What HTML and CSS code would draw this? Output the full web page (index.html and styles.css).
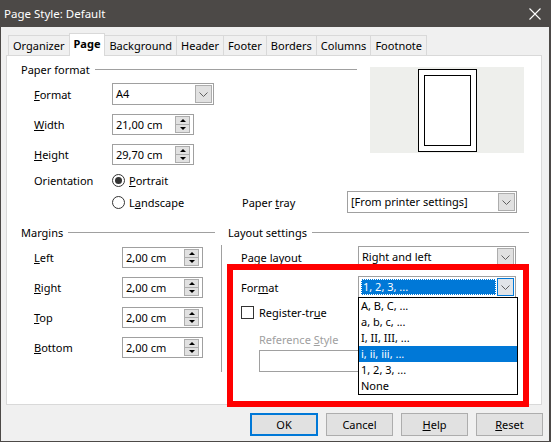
FILE: index.html
```html
<!DOCTYPE html>
<html>
<head>
<meta charset="utf-8">
<title>Page Style: Default</title>
<link rel="stylesheet" href="styles.css">
</head>
<body>
<div class="window">
  <div class="titlebar">
    <span class="title">Page Style: Default</span>
    <svg class="close" width="12" height="12" viewBox="0 0 12 12"><path d="M0.5 0.5 L11.5 11.5 M11.5 0.5 L0.5 11.5" stroke="#fff" stroke-width="1.1" fill="none"/></svg>
  </div>
  <div class="tabs">
    <div class="tab">Organizer</div>
    <div class="tab active">Page</div>
    <div class="tab">Background</div>
    <div class="tab">Header</div>
    <div class="tab">Footer</div>
    <div class="tab">Borders</div>
    <div class="tab">Columns</div>
    <div class="tab">Footnote</div>
  </div>
  <div class="panel">
    <div class="top">
      <div class="heading h-paper">Paper format</div>
      <div class="lbl r2"><u>F</u>ormat</div>
      <div class="combo c-a4 r2"><span class="val">A4</span><span class="btn"><svg width="9" height="5" viewBox="0 0 9 5"><path d="M0.5 0.5 L4.5 4.5 L8.5 0.5" fill="none" stroke="#606060"/></svg></span></div>
      <div class="lbl r3"><u>W</u>idth</div>
      <div class="spin s-paper r3"><span class="val">21,00 cm</span><span class="sbtn"><span><b class="up"></b></span><span><b class="down"></b></span></span></div>
      <div class="lbl r4"><u>H</u>eight</div>
      <div class="spin s-paper r4"><span class="val">29,70 cm</span><span class="sbtn"><span><b class="up"></b></span><span><b class="down"></b></span></span></div>
      <div class="lbl r5">Orientation</div>
      <div class="radio r5"><i class="on"></i><span><u>P</u>ortrait</span></div>
      <div class="radio r6"><i></i><span>L<u>a</u>ndscape</span></div>
      <div class="tray-lbl">Paper <u>t</u>ray</div>
      <div class="combo c-tray"><span class="val">[From printer settings]</span><span class="btn"><svg width="9" height="5" viewBox="0 0 9 5"><path d="M0.5 0.5 L4.5 4.5 L8.5 0.5" fill="none" stroke="#606060"/></svg></span></div>
      <div class="preview"><div class="page-outer"><div class="page-inner"></div></div></div>
    </div>
    <div class="bottom">
      <div class="margins">
        <div class="heading m-head">Margins</div>
        <div class="lbl mr2"><u>L</u>eft</div>
        <div class="spin s-margin mr2"><span class="val">2,00 cm</span><span class="sbtn"><span><b class="up"></b></span><span><b class="down"></b></span></span></div>
        <div class="lbl mr3"><u>R</u>ight</div>
        <div class="spin s-margin mr3"><span class="val">2,00 cm</span><span class="sbtn"><span><b class="up"></b></span><span><b class="down"></b></span></span></div>
        <div class="lbl mr4"><u>T</u>op</div>
        <div class="spin s-margin mr4"><span class="val">2,00 cm</span><span class="sbtn"><span><b class="up"></b></span><span><b class="down"></b></span></span></div>
        <div class="lbl mr5"><u>B</u>ottom</div>
        <div class="spin s-margin mr5"><span class="val">2,00 cm</span><span class="sbtn"><span><b class="up"></b></span><span><b class="down"></b></span></span></div>
      </div>
      <div class="vsep"></div>
      <div class="layout">
        <div class="heading l-head">Layout settings</div>
        <div class="lbl lr2">Page layout</div>
        <div class="combo c-layout lr2"><span class="val">Right and left</span><span class="btn"><svg width="9" height="5" viewBox="0 0 9 5"><path d="M0.5 0.5 L4.5 4.5 L8.5 0.5" fill="none" stroke="#606060"/></svg></span></div>
        <div class="lbl lr3">For<u>m</u>at</div>
        <div class="combo focus c-layout lr3">
          <span class="val">1, 2, 3, ...</span><span class="btn"><svg width="9" height="5" viewBox="0 0 9 5"><path d="M0.5 0.5 L4.5 4.5 L8.5 0.5" fill="none" stroke="#606060"/></svg></span>
          <div class="list">
            <div>A, B, C, ...</div>
            <div>a, b, c, ...</div>
            <div>I, II, III, ...</div>
            <div class="sel">i, ii, iii, ...</div>
            <div>1, 2, 3, ...</div>
            <div>None</div>
          </div>
        </div>
        <div class="check"><i></i><span>Register-tr<u>u</u>e</span></div>
        <div class="ref-lbl">Reference <u>S</u>tyle</div>
        <div class="ref-input"></div>
      </div>
    </div>
  </div>
  <div class="buttons">
    <div class="button default">OK</div>
    <div class="button">Cancel</div>
    <div class="button"><u>H</u>elp</div>
    <div class="button"><u>R</u>eset</div>
  </div>
  <div class="annot"></div>
</div>
</body>
</html>
```
FILE: styles.css
```css
* { box-sizing: border-box; }
html, body { margin: 0; padding: 0; }
body {
  font-family: "Noto Sans", "Open Sans", sans-serif;
  font-size: 11px;
  color: #000;
  background: #fff;
}
u { text-decoration: underline; text-underline-offset: 1px; }

.window {
  position: relative;
  width: 551px;
  height: 442px;
  background: #f0f0f0;
  border: 1px solid #4c4947;
  border-right-width: 2px;
  display: flex;
  flex-direction: column;
}

.titlebar {
  height: 26px;
  flex: none;
  background: #4c4947;
  color: #fff;
  display: flex;
  align-items: center;
  justify-content: space-between;
  padding: 0 8px 1px 3px;
  font-size: 11.5px;
}
.close { display: block; }

.tabs {
  height: 28px;
  flex: none;
  display: flex;
  align-items: flex-end;
  padding-left: 7px;
}
.tab {
  height: 20px;
  padding: 0 4px;
  border: 1px solid #d9d9d9;
  border-bottom: 0;
  margin-right: -1px;
  line-height: 19px;
  white-space: nowrap;
}
.tab.active {
  height: 23px;
  margin-bottom: -1px;
  background: #fff;
  font-weight: bold;
  position: relative;
  z-index: 1;
  line-height: 20px;
}

.panel {
  height: 350px;
  flex: none;
  margin: 0 7px 0 5px;
  background: #fff;
  border: 1px solid #d9d9d9;
  padding: 3px 0 0 14px;
}

.heading {
  display: flex;
  align-items: center;
  white-space: nowrap;
}
.heading::after {
  content: "";
  flex: 1;
  height: 1px;
  background: #a0a0a0;
  margin-left: 5px;
}

.top {
  display: grid;
  grid-template-columns: 13px 78px 130px 105px 10px 13px 147px 7px;
  grid-template-rows: 20px 30px 30px 30px 22px 22px;
  align-items: center;
}
.h-paper { grid-column: 1 / 6; grid-row: 1; }
.lbl { grid-column: 2; white-space: nowrap; }
.r2 { grid-row: 2; }
.r3 { grid-row: 3; }
.r4 { grid-row: 4; }
.r5 { grid-row: 5; }
.r6 { grid-row: 6; }
.top .combo, .top .spin, .top .radio { grid-column: 3; }

.combo {
  position: relative;
  display: flex;
  align-items: stretch;
  height: 22px;
  border: 1px solid #a0a0a0;
  background: #fff;
  padding: 1px;
}
.combo .val {
  flex: 1;
  padding-left: 2px;
  line-height: 18px;
  white-space: nowrap;
  overflow: hidden;
}
.combo .btn {
  width: 17px;
  flex: none;
  background: #e1e1e1;
  border: 1px solid #adadad;
  display: flex;
  align-items: center;
  justify-content: center;
}
.combo .btn svg { display: block; }
.c-a4 { width: 102px; }
.c-tray { grid-column: 5 / 8; grid-row: 6; width: 170px; }
.top .c-tray { grid-column: 5 / 8; }

.spin {
  display: flex;
  align-items: center;
  height: 21px;
  border: 1px solid #a0a0a0;
  background: #fff;
  padding: 0 3px;
}
.spin .val { flex: 1; white-space: nowrap; }
.sbtn {
  width: 15px;
  height: 17px;
  border: 1px solid #adadad;
  background: #e1e1e1;
  display: flex;
  flex-direction: column;
}
.sbtn > span {
  flex: 1;
  display: flex;
  align-items: center;
  justify-content: center;
}
.sbtn > span + span { border-top: 1px solid #adadad; }
.up, .down { display: block; width: 0; height: 0; border-left: 3px solid transparent; border-right: 3px solid transparent; }
.up { border-bottom: 3px solid #000; }
.down { border-top: 3px solid #000; }
.s-paper { width: 82px; }
.s-margin { width: 81px; }

.radio { display: flex; align-items: center; gap: 4px; }
.radio i {
  width: 13px;
  height: 13px;
  border: 1px solid #333;
  border-radius: 50%;
  background: #fff;
  display: flex;
  align-items: center;
  justify-content: center;
}
.radio i.on::after {
  content: "";
  width: 7px;
  height: 7px;
  border-radius: 50%;
  background: #333;
}

.tray-lbl { grid-column: 4; grid-row: 6; white-space: nowrap; }

.preview {
  grid-column: 7 / 9;
  grid-row: 1 / 5;
  align-self: start;
  margin-top: 8px;
  height: 86px;
  background: #eeefec;
  display: flex;
  justify-content: center;
  padding-top: 2px;
}
.page-outer {
  width: 59px;
  height: 83px;
  border: 1px solid #000;
  background: #fff;
  padding: 5px;
}
.page-inner {
  width: 47px;
  height: 71px;
  border: 1px solid #000;
}

.bottom { display: flex; margin-top: 9px; align-items: flex-start; }

.margins {
  width: 194px;
  display: grid;
  grid-template-columns: 13px 88px 81px 12px;
  grid-template-rows: 20px repeat(4, 30px);
  align-items: center;
}
.m-head { grid-column: 1 / 5; grid-row: 1; }
.margins .spin { grid-column: 3; }
.mr2 { grid-row: 2; }
.mr3 { grid-row: 3; }
.mr4 { grid-row: 4; }
.mr5 { grid-row: 5; }

.vsep {
  width: 1px;
  height: 127px;
  background: #a0a0a0;
  margin: 23px 0 0 6px;
}

.layout {
  width: 301px;
  margin-left: 6px;
  display: grid;
  grid-template-columns: 13px 117px 158px 13px;
  grid-template-rows: 20px 30px 30px 20px 28px 22px;
  align-items: center;
}
.l-head { grid-column: 1 / 5; grid-row: 1; }
.lr2 { grid-row: 2; }
.lr3 { grid-row: 3; }
.layout .combo { grid-column: 3; }

.combo.focus .val {
  background: #0078d7;
  color: #fff;
  outline: 1px dotted #fff;
  outline-offset: -1px;
  margin: 1px 1px 1px 1px;
  line-height: 16px;
}
.combo.focus .btn { border-color: #0078d7; background: #e1e4e8; }

.list {
  position: absolute;
  top: 100%;
  left: -1px;
  width: 160px;
  border: 1px solid #000;
  background: #fff;
  z-index: 5;
}
.list div {
  height: 16px;
  line-height: 16px;
  padding-left: 2px;
  white-space: nowrap;
}
.list .sel { background: #0078d7; color: #fff; }

.check {
  grid-column: 2 / 5;
  grid-row: 4;
  display: flex;
  align-items: center;
  gap: 5px;
}
.check i {
  width: 13px;
  height: 13px;
  border: 1px solid #333;
  background: #fff;
}

.ref-lbl {
  grid-column: 2 / 4;
  grid-row: 5;
  align-self: end;
  margin-left: 18px;
  line-height: 20px;
  color: #a0a0a0;
}
.ref-input {
  grid-column: 2 / 4;
  grid-row: 6;
  margin-left: 18px;
  width: 140px;
  height: 22px;
  border: 1px solid #a0a0a0;
  background: #fff;
}

.buttons {
  flex: none;
  display: flex;
  justify-content: flex-end;
  gap: 8px;
  padding: 8px 6px 0 0;
}
.button {
  width: 67px;
  height: 23px;
  background: #e1e1e1;
  border: 1px solid #adadad;
  display: flex;
  align-items: center;
  justify-content: center;
}
.button.default { border: 2px solid #0078d7; width: 68px; }

.annot {
  position: absolute;
  left: 226px;
  top: 263px;
  width: 302px;
  height: 143px;
  border: 6px solid #ff0000;
  pointer-events: none;
}
```
